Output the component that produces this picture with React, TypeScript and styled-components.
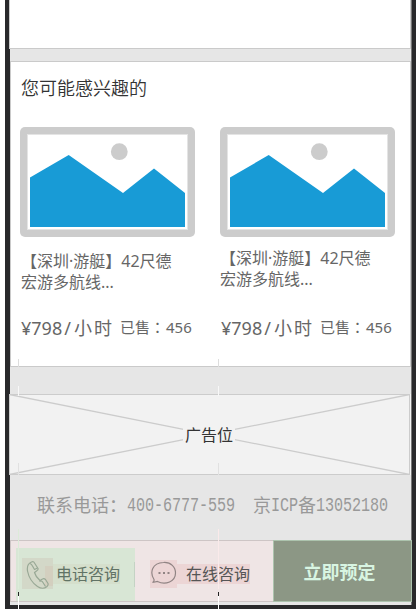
import React from 'react';
import styled, { createGlobalStyle, css } from 'styled-components';

const GlobalStyle = createGlobalStyle`
  * { box-sizing: border-box; }
  body { margin: 0; background: #fff; overflow: hidden; }
`;

const Device = styled.div`
  position: relative;
  width: 416px;
  height: 609px;
  overflow: hidden;
  padding: 0 4px 4px 5px;
  background: linear-gradient(90deg, #fff 5px, #29292b 5px);
  font-family: 'Noto Sans', 'Noto Sans CJK SC', sans-serif;
`;

const Screen = styled.main`
  display: flex;
  flex-direction: column;
  width: 402px;
  height: 605px;
  margin-left: 5px;
  background: #e6e6e6;
  border-right: 1px solid #777;
`;

const TopPanel = styled.div`
  flex: none;
  height: 49px;
  margin-left: -1px;
  background: #fff;
  border: 1px solid #cacaca;
  border-top: 0;
`;

const Panel = styled.section`
  flex: none;
  height: 306px;
  margin-top: 12px;
  padding: 13px 0 0 9px;
  background: #fff;
  border: 1px solid #cacaca;
`;

const Heading = styled.h2`
  margin: 0 0 0 1px;
  font: 350 18px/24px 'Noto Sans CJK SC', sans-serif;
  color: #333;
`;

const Products = styled.div`
  display: grid;
  grid-template-columns: 175px 175px;
  column-gap: 25px;
  margin-top: 28px;
`;

const Product = styled.article`
  display: flex;
  flex-direction: column;
  height: 215px;
`;

const Picture = styled.svg`
  display: block;
  width: 175px;
  height: 110px;
`;

const ProductName = styled.p<{ $raised?: boolean }>`
  margin: ${(p) => (p.$raised ? 11 : 14)}px 0 ${(p) => (p.$raised ? 26 : 23)}px ${(p) => (p.$raised ? 0 : 1)}px;
  font-size: 16px;
  line-height: 21px;
  color: #666;
  white-space: nowrap;
`;

const PriceRow = styled.div`
  display: flex;
  align-items: center;
  height: 24px;
  padding-left: 1px;
  color: #666;
  white-space: nowrap;
`;

const Price = styled.span`
  width: 99px;
  font-size: 18px;
  line-height: 24px;
`;

const Unit = styled.span`
  letter-spacing: 2px;
`;

const Slash = styled.span`
  margin: 0 3px 0 2px;
`;

const Sold = styled.span`
  margin-top: -2px;
  font-size: 15px;
  line-height: 24px;
`;

const Colon = styled.span`
  margin-right: 1px;
  font-family: 'Noto Sans CJK JP', sans-serif;
`;

const Advert = styled.div`
  display: grid;
  flex: none;
  place-items: center;
  width: 402px;
  height: 81px;
  margin: 27px 0 0 -1px;
  background: #f2f2f2;
`;

const AdvertCross = styled.svg`
  grid-area: 1 / 1;
  width: 402px;
  height: 81px;
`;

const AdvertLabel = styled.span`
  grid-area: 1 / 1;
  padding: 0 2px;
  margin: 0 2px 2px 0;
  background: #f2f2f2;
  font: 16px/20px 'Noto Sans CJK SC', sans-serif;
  color: #333;
`;

const Contact = styled.footer`
  display: flex;
  flex: none;
  height: 24px;
  margin: 17px 0 0 27px;
  font: 18px/24px 'Noto Sans CJK SC', sans-serif;
  color: #999;
  white-space: pre;
`;

const HalfWidth = styled.span`
  display: flex;
  margin-top: 1px;
  font-family: 'Liberation Mono', monospace;
`;

const Cell = styled.span`
  display: flex;
  justify-content: center;
  width: 9px;
  transform: scale(0.84, 1.1);
`;

const Gap = styled.span`
  width: 18px;
`;

const ActionBar = styled.nav`
  display: flex;
  flex: none;
  width: 402px;
  height: 62px;
  margin-top: 24px;
`;

const ContactActions = styled.div`
  display: flex;
  width: 263px;
  padding: 7px 0 0 5px;
  background: #efe5e5;
  border: 1px solid #cdc5c5;
  border-right: 0;
`;

const PhoneAction = styled.div`
  display: flex;
  align-items: center;
  width: 119px;
  height: 53px;
  background: #d8e6d5;
`;

const Divider = styled.i`
  width: 1px;
  height: 25px;
  margin-left: auto;
  background: #c4d3c4;
`;

const ChatAction = styled.div`
  display: flex;
  align-items: center;
  height: 53px;
  margin-left: 15px;
`;

const tile = css`
  display: block;
  flex: none;
`;

const PhoneIcon = styled.svg`
  ${tile}
  width: 31px;
  height: 31px;
  margin: 0 0 3px 6px;
  background: #d3d8c8;
`;

const ChatIcon = styled.svg`
  ${tile}
  width: 27px;
  height: 28px;
  margin-bottom: 2px;
  background: #ecd5d5;
`;

const ActionLabel = styled.span<{ $tone: 'green' | 'pink' }>`
  height: 20px;
  font: 16px/18px 'Noto Sans CJK SC', sans-serif;
  white-space: nowrap;
  ${(p) =>
    p.$tone === 'green'
      ? 'padding-left: 3px; margin-bottom: 1px; background: #d5dfcc; color: #617365;'
      : 'padding-left: 9px; margin-bottom: 1px; background: #ecd5d5; color: #555;'}
`;

const BookButton = styled.button`
  width: 139px;
  height: 62px;
  padding: 0 6px 0 0;
  border: 1px solid #acc3ad;
  background: #8c9785;
  color: #d8f5e2;
  font: 700 18px/24px 'Noto Sans CJK SC', sans-serif;
`;

const Guide = styled.i<{ $x: number; $y: number; $h: number; $color?: string }>`
  position: absolute;
  left: ${(p) => p.$x}px;
  top: ${(p) => p.$y}px;
  width: 1px;
  height: ${(p) => p.$h}px;
  background: ${(p) => p.$color ?? '#f8f8f8'};
`;

const MountainPicture = () => (
  <Picture viewBox="0 0 175 110">
    <rect width="175" height="110" rx="5" fill="#ccc" />
    <rect x="7.5" y="7.5" width="160" height="95" fill="#fff" stroke="#e4e4e4" />
    <circle cx="99.3" cy="24.7" r="8.4" fill="#ccc" />
    <path d="M10 50.5 48.7 28 103 66 134 41.5 165 66V100H10Z" fill="#189bd6" />
  </Picture>
);

const ProductCard = ({ raised }: { raised?: boolean }) => (
  <Product>
    <MountainPicture />
    <ProductName $raised={raised}>
      【深圳·游艇】42尺德
      <br />
      宏游多航线...
    </ProductName>
    <PriceRow>
      <Price>
        ¥798<Slash>/</Slash>
        <Unit>小时</Unit>
      </Price>
      <Sold>
        已售<Colon lang="ja">：</Colon>456
      </Sold>
    </PriceRow>
  </Product>
);

const Cells = ({ text }: { text: string }) => (
  <HalfWidth>
    {[...text].map((c, i) => (
      <Cell key={i}>{c}</Cell>
    ))}
  </HalfWidth>
);

export default function App() {
  return (
    <>
      <GlobalStyle />
      <Device>
        <Screen>
          <TopPanel />
          <Panel>
            <Heading>您可能感兴趣的</Heading>
            <Products>
              <ProductCard />
              <ProductCard raised />
            </Products>
          </Panel>
          <Advert>
            <AdvertCross viewBox="0 0 402 81" fill="none" stroke="#ccc">
              <rect x=".5" y=".5" width="400" height="80" />
              <path d="M.5.5 400.5 80.5M.5 80.5 400.5.5" strokeWidth="1.3" />
            </AdvertCross>
            <AdvertLabel>广告位</AdvertLabel>
          </Advert>
          <Contact>
            <span>联系电话：</span>
            <Cells text="400-6777-559" />
            <Gap />
            <span>京</span>
            <Cells text="ICP" />
            <span>备</span>
            <Cells text="13052180" />
          </Contact>
          <ActionBar>
            <ContactActions>
              <PhoneAction>
                <PhoneIcon viewBox="0 0 31 31" fill="none" stroke="#98a895" strokeWidth="1.2" strokeLinejoin="round">
                  <rect x="23" y="8" width="8" height="20" fill="#d3cfbf" stroke="none" />
                  <path d="M9.500 4Q11.500 3 12.500 5L16 10.500Q16.500 12 14.500 13L12.500 14.500Q13.500 18.500 18 22.500L20.500 21Q22 20 23.500 21.500L26 25.500Q26.500 27 25 28.500Q21 32 15.500 28.500Q7.500 23 5.500 13Q4.500 6 9.500 4Z" />
                  <path d="M8 5.500Q9.500 6 10.500 8L12.500 11.500L15.500 10M17.500 23.500Q19.500 22 21 24.500L23.500 28.500" />
                </PhoneIcon>
                <ActionLabel $tone="green">电话咨询</ActionLabel>
                <Divider />
              </PhoneAction>
              <ChatAction>
                <ChatIcon viewBox="0 0 27 28" fill="none" stroke="#918484" strokeWidth="1.2">
                  <path d="M4 19.500C-.5 12.500 2 3 13.500 2.500C21 2 25.500 7 25.500 13C25.500 21.500 15.500 25.500 7.500 21.500L2.500 22.500Q4.500 21.500 4 19.500Z" />
                  <path d="M8.500 13h2M13 13h2M17.500 13h2" strokeWidth="2" />
                </ChatIcon>
                <ActionLabel $tone="pink">在线咨询</ActionLabel>
              </ChatAction>
            </ContactActions>
            <BookButton>立即预定</BookButton>
          </ActionBar>
        </Screen>
        {[18, 218].map((x) => (
          <React.Fragment key={x}>
            <Guide $x={x} $y={359} $h={8} $color="#ddd" />
            <Guide $x={x} $y={386} $h={10} />
            <Guide $x={x} $y={463} $h={12} $color="#e1e1e1" />
            <Guide $x={x} $y={529} $h={60} $color={x === 18 ? '#dcebd9' : '#faeaea'} />
            <Guide $x={x} $y={592} $h={4} $color="#222" />
            <Guide $x={x} $y={596} $h={13} $color="#fff" />
          </React.Fragment>
        ))}
      </Device>
    </>
  );
}
